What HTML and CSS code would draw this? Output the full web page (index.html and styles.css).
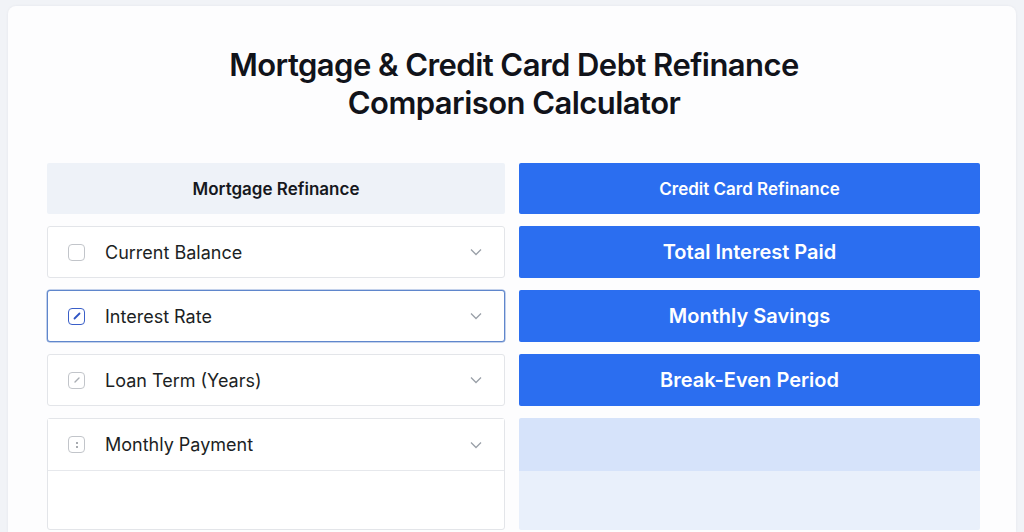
FILE: index.html
```html
<!DOCTYPE html>
<html lang="en">
<head>
<meta charset="utf-8">
<title>Mortgage & Credit Card Debt Refinance Comparison Calculator</title>
<link rel="stylesheet" href="styles.css">
</head>
<body>
<div class="card">
  <h1 class="title">Mortgage &amp; Credit Card Debt Refinance<br>Comparison Calculator</h1>
  <div class="columns">
    <div class="col">
      <div class="head head-light">Mortgage Refinance</div>
      <div class="field">
        <span class="box"></span>
        <span class="label">Current Balance</span>
        <svg class="chev" viewBox="0 0 12 8" width="12" height="8"><path d="M1 1.5 6 6.5 11 1.5" fill="none" stroke="#9aa0a8" stroke-width="1.3"/></svg>
      </div>
      <div class="field field-active">
        <span class="box box-blue"><svg viewBox="0 0 16 16" width="16" height="16"><path d="M5.5 10.5 10.5 5.5" stroke="#2f55c4" stroke-width="1.8" stroke-linecap="round"/></svg></span>
        <span class="label">Interest Rate</span>
        <svg class="chev" viewBox="0 0 12 8" width="12" height="8"><path d="M1 1.5 6 6.5 11 1.5" fill="none" stroke="#9aa0a8" stroke-width="1.3"/></svg>
      </div>
      <div class="field">
        <span class="box"><svg viewBox="0 0 16 16" width="16" height="16"><path d="M6 10 10 6" stroke="#a9adb3" stroke-width="1.4" stroke-linecap="round"/></svg></span>
        <span class="label">Loan Term (Years)</span>
        <svg class="chev" viewBox="0 0 12 8" width="12" height="8"><path d="M1 1.5 6 6.5 11 1.5" fill="none" stroke="#9aa0a8" stroke-width="1.3"/></svg>
      </div>
      <div class="group">
        <div class="field field-flat">
          <span class="box"><svg viewBox="0 0 16 16" width="16" height="16"><circle cx="8" cy="6" r="1" fill="#8a8f96"/><circle cx="8" cy="10" r="1" fill="#8a8f96"/></svg></span>
          <span class="label">Monthly Payment</span>
          <svg class="chev" viewBox="0 0 12 8" width="12" height="8"><path d="M1 1.5 6 6.5 11 1.5" fill="none" stroke="#9aa0a8" stroke-width="1.3"/></svg>
        </div>
        <div class="group-body"></div>
      </div>
    </div>
    <div class="col">
      <div class="head head-blue">Credit Card Refinance</div>
      <div class="result">Total Interest Paid</div>
      <div class="result">Monthly Savings</div>
      <div class="result">Break-Even Period</div>
      <div class="panel">
        <div class="panel-top"></div>
        <div class="panel-bottom"></div>
      </div>
    </div>
  </div>
</div>
</body>
</html>
```

FILE: styles.css
```css
* { box-sizing: border-box; }

html, body {
  margin: 0;
  height: 100%;
  overflow: hidden;
}

body {
  background: #f1f3f7;
  padding: 6px 8px 0;
  font-family: "Inter", "Lato", sans-serif;
  color: #15171c;
}

.card {
  background: #fdfdfe;
  border-radius: 8px 8px 0 0;
  box-shadow: 0 0 3px rgba(30, 40, 60, 0.06);
  padding: 40px 35px 0 39px;
  height: 526px;
  overflow: hidden;
}

.title {
  margin: 0 0 41px;
  text-align: center;
  font-size: 31px;
  line-height: 38px;
  font-weight: 600;
  letter-spacing: -0.55px;
  color: #11131a;
}

.columns {
  display: grid;
  grid-template-columns: 458px 461px;
  column-gap: 14px;
}

.col {
  display: flex;
  flex-direction: column;
  gap: 12px;
}

.head {
  height: 51px;
  display: flex;
  align-items: center;
  justify-content: center;
  font-size: 17px;
  font-weight: 600;
  border-radius: 2px;
}

.head-light {
  background: #eef2f8;
  color: #16181d;
}

.head-blue {
  background: #2b6ef0;
  color: #fff;
}

.field {
  height: 52px;
  display: flex;
  align-items: center;
  padding: 0 20px 0 20px;
  border: 1px solid #e3e5e9;
  border-radius: 3px;
  background: #fff;
}

.field-active {
  border-color: #5f86cc;
  box-shadow: 0 0 0 0.5px #8aa6d8;
}

.field-flat {
  border: 0;
  border-bottom: 1px solid #e6e8ec;
  border-radius: 0;
  height: 52px;
}

.box {
  width: 17px;
  height: 17px;
  border: 1.5px solid #c2c5ca;
  border-radius: 4px;
  display: flex;
  align-items: center;
  justify-content: center;
  flex: none;
}

.box svg { flex: none; }

.box-blue {
  border-color: #3a5fc8;
}

.label {
  margin-left: 20px;
  font-size: 18px;
  font-weight: 400;
  color: #1c1f24;
  flex: 1;
}

.chev { flex: none; margin-right: 2px; }

.group {
  border: 1px solid #e3e5e9;
  border-radius: 3px;
  background: #fff;
  height: 112px;
  display: flex;
  flex-direction: column;
}

.group-body { flex: 1; }

.result {
  height: 52px;
  display: flex;
  align-items: center;
  justify-content: center;
  background: #2b6ef0;
  color: #fff;
  font-size: 20px;
  font-weight: 600;
  border-radius: 2px;
}

.panel {
  height: 112px;
  display: flex;
  flex-direction: column;
  border-radius: 2px;
  overflow: hidden;
}

.panel-top {
  height: 53px;
  background: #d6e3fa;
}

.panel-bottom {
  flex: 1;
  background: #e9f0fb;
}
```
